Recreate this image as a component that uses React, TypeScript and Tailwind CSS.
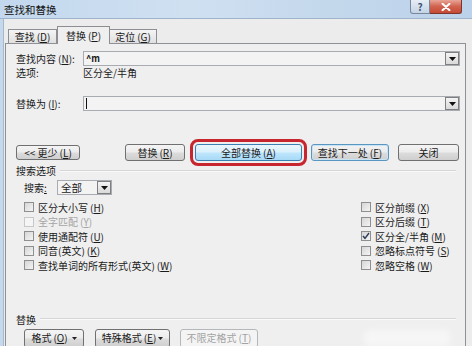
import clsx from "clsx";
import type { ReactNode } from "react";

const Key = ({ k }: { k: string }) => (
  <span className="ml-[2px]">
    (<span className="underline">{k}</span>)
  </span>
);

const DropArrow = () => (
  <span className="flex h-[13px] w-[14px] shrink-0 items-center justify-center border border-[#7f7f7f] bg-[linear-gradient(#f4f4f4,#d9d9d9)]">
    <svg width="7" height="4" viewBox="0 0 7 4">
      <path d="M0 0h7L3.5 4z" fill="#111" />
    </svg>
  </span>
);

const Btn = ({
  children,
  className,
  tone = "plain",
}: {
  children: ReactNode;
  className: string;
  tone?: "plain" | "active" | "hover" | "off";
}) => (
  <button
    type="button"
    className={clsx(
      "flex shrink-0 items-center justify-center rounded-[3px] border text-[10px] leading-none",
      tone === "plain" &&
        "border-[#707070] bg-[linear-gradient(#f4f4f4_0%,#ececec_48%,#dcdcdc_52%,#cfcfcf_100%)] text-[#1a1a1a]",
      tone === "active" &&
        "border-[#3c7fb1] bg-[linear-gradient(#eaf6fd_0%,#d9f0fc_48%,#bee6fd_52%,#a7d9f5_100%)] text-[#1a1a1a]",
      tone === "hover" &&
        "border-[#5a96c2] bg-[linear-gradient(#f2f2f2_0%,#ebebeb_48%,#dddddd_52%,#cfcfcf_100%)] text-[#1a1a1a] shadow-[inset_0_0_0_1px_#c7e3f4]",
      tone === "off" && "border-[#b5b8bb] bg-[#f4f4f4] text-[#a3a3a3]",
      className,
    )}
  >
    {children}
  </button>
);

const Check = ({
  label,
  k,
  checked,
  disabled,
}: {
  label: string;
  k: string;
  checked?: boolean;
  disabled?: boolean;
}) => (
  <div className="flex h-[14.5px] items-center gap-[4px]">
    <span
      className={clsx(
        "flex h-[10px] w-[10px] shrink-0 items-center justify-center border",
        disabled
          ? "border-[#c8c8c8] bg-[#f5f5f5]"
          : "border-[#8e8f8f] bg-[linear-gradient(135deg,#d6d6d6,#f4f4f4)]",
      )}
    >
      {checked && (
        <svg width="8" height="8" viewBox="0 0 8 8">
          <path d="M1 4l2 2.3L7 1" fill="none" stroke="#2b3b55" strokeWidth="1.4" />
        </svg>
      )}
    </span>
    <span className={disabled ? "text-[#a5a5a5]" : "text-[#1a1a1a]"}>
      {label}
      <Key k={k} />
    </span>
  </div>
);

const GroupLabel = ({ text, className }: { text: string; className: string }) => (
  <div className={clsx("flex h-[13px] items-center", className)}>
    <span>{text}</span>
    <span className="ml-[4px] mr-[4px] h-[2px] flex-1 border-t border-b border-t-[#d5d5d5] border-b-[#fafafa]" />
  </div>
);

export default function App() {
  return (
    <div className="flex h-[346px] w-[472px] flex-col overflow-hidden bg-[#ececec] font-['Noto_Sans_CJK_SC',sans-serif] text-[10px] leading-[13px] text-[#1a1a1a]">
      {/* title bar */}
      <div className="flex h-[19px] shrink-0 items-start border-b border-[#9fb4cc] bg-[linear-gradient(90deg,#c3d8ee,#cfe0f1_40%,#c4d8ec_70%,#bcd2ea)]">
        <span className="pl-[4px] pt-[3px] text-[10.5px] text-[#111]">查找和替换</span>
        <div className="ml-auto mr-[10px] flex">
          <div className="flex h-[14px] w-[20px] items-center justify-center rounded-bl-[3px] border border-t-0 border-[#76879e] bg-[linear-gradient(#e6edf5,#c4d3e3)] text-[10px] font-bold text-[#3b5579]">
            ?
          </div>
          <div className="flex h-[14px] w-[32px] items-center justify-center rounded-br-[3px] border border-l-0 border-t-0 border-[#7e3428] bg-[linear-gradient(#e8a597,#d1624f_50%,#c44a36)]">
            <svg width="10" height="8" viewBox="0 0 10 8">
              <path d="M1.5 0.8l7 6.4M8.5 0.8l-7 6.4" stroke="#fff" strokeWidth="2" strokeLinecap="round" />
            </svg>
          </div>
        </div>
      </div>

      <div className="flex flex-1">
        <div className="w-[4px] shrink-0 border-r border-[#a6b8cc] bg-[#c6d8ec]" />
        <div className="flex flex-1 flex-col pl-[1px] pr-[6px] pt-[7px]">
          {/* tabs */}
          <div className="flex h-[17px] items-end pl-[3px]">
            <div className="flex h-[14px] w-[49px] items-center justify-center border border-b-0 border-[#8c8e94] bg-[linear-gradient(#f4f4f4,#e0e0e0)]">
              查找
              <Key k="D" />
            </div>
            <div className="relative z-10 -mb-px flex h-[18px] w-[53px] items-center justify-center border border-b-0 border-[#8c8e94] bg-[#efefef] pb-[1px]">
              替换
              <Key k="P" />
            </div>
            <div className="flex h-[14px] w-[47px] items-center justify-center border border-b-0 border-l-0 border-[#8c8e94] bg-[linear-gradient(#f4f4f4,#e0e0e0)]">
              定位
              <Key k="G" />
            </div>
          </div>

          {/* panel */}
          <div className="flex h-[320px] shrink-0 flex-col border border-[#8e9196] bg-[#efefef] pl-[10px] pr-[5px]">
            <div className="mt-[7px] flex h-[15px] items-center">
              <span className="w-[67px]">
                查找内容<Key k="N" />:
              </span>
              <div className="flex h-[15px] flex-1 items-center border border-[#a9abb2] bg-[#f3f3f3] pl-[2px]">
                <span className="text-[9px] font-bold leading-none">^m</span>
                <span className="ml-auto">
                  <DropArrow />
                </span>
              </div>
            </div>
            <div className="flex h-[13px] items-center">
              <span className="w-[67px]">选项:</span>
              <span>区分全/半角</span>
            </div>
            <div className="mt-[17px] flex h-[15px] items-center">
              <span className="w-[67px]">
                替换为<Key k="I" />:
              </span>
              <div className="flex h-[15px] flex-1 items-center border border-[#a9abb2] bg-[#f3f3f3] pl-[2px]">
                <span className="h-[11px] w-px bg-[#111]" />
                <span className="ml-auto">
                  <DropArrow />
                </span>
              </div>
            </div>

            {/* main buttons */}
            <div className="mt-[33px] flex h-[17px] items-center">
              <Btn className="h-[15px] w-[64px]">
                &lt;&lt; 更少<Key k="L" />
              </Btn>
              <Btn className="ml-[45px] h-[17px] w-[60px]">
                替换<Key k="R" />
              </Btn>
              <Btn
                tone="active"
                className="ml-[10px] h-[17px] w-[107px] outline-[3px] outline-offset-[2px] outline-[#c8262e] outline-solid"
              >
                全部替换<Key k="A" />
              </Btn>
              <Btn tone="hover" className="ml-[9px] h-[17px] w-[78px]">
                查找下一处<Key k="F" />
              </Btn>
              <Btn className="ml-[9px] h-[17px] w-[61px]">关闭</Btn>
            </div>

            <GroupLabel text="搜索选项" className="mt-[3px]" />

            <div className="mt-[3px] flex h-[15px] items-center">
              <span className="w-[41px] pl-[8px]">
                搜索<span className="underline">:</span>
              </span>
              <div className="flex h-[15px] w-[55px] items-center border border-[#a9abb2] bg-[#f3f3f3] pl-[3px]">
                <span className="text-[10.5px]">全部</span>
                <span className="ml-auto">
                  <DropArrow />
                </span>
              </div>
            </div>

            <div className="mt-[5px] flex">
              <div className="flex w-[345px] flex-col pl-[8px]">
                <Check label="区分大小写" k="H" />
                <Check label="全字匹配" k="Y" disabled />
                <Check label="使用通配符" k="U" />
                <Check label="同音(英文)" k="K" />
                <Check label="查找单词的所有形式(英文)" k="W" />
              </div>
              <div className="flex flex-col">
                <Check label="区分前缀" k="X" />
                <Check label="区分后缀" k="T" />
                <Check label="区分全/半角" k="M" checked />
                <Check label="忽略标点符号" k="S" />
                <Check label="忽略空格" k="W" />
              </div>
            </div>

            <GroupLabel text="替换" className="mt-[40px]" />

            <div className="mt-[3px] flex h-[19px] items-center pl-[8px]">
              <Btn className="h-[19px] w-[60px] gap-[4px]">
                <span>
                  格式<Key k="O" />
                </span>
                <svg width="5" height="3" viewBox="0 0 5 3">
                  <path d="M0 0h5L2.5 3z" fill="#222" />
                </svg>
              </Btn>
              <Btn className="ml-[11px] h-[19px] w-[75px] gap-[2px]">
                <span>
                  特殊格式<Key k="E" />
                </span>
                <svg width="5" height="3" viewBox="0 0 5 3">
                  <path d="M0 0h5L2.5 3z" fill="#222" />
                </svg>
              </Btn>
              <Btn tone="off" className="ml-[10px] h-[19px] w-[78px]">
                不限定格式<Key k="T" />
              </Btn>
              <div className="ml-auto mr-[10px] h-[16px] w-[86px] rounded-[4px] bg-[#f6f6f6] blur-[3px]" />
            </div>
          </div>
        </div>
      </div>
    </div>
  );
}
